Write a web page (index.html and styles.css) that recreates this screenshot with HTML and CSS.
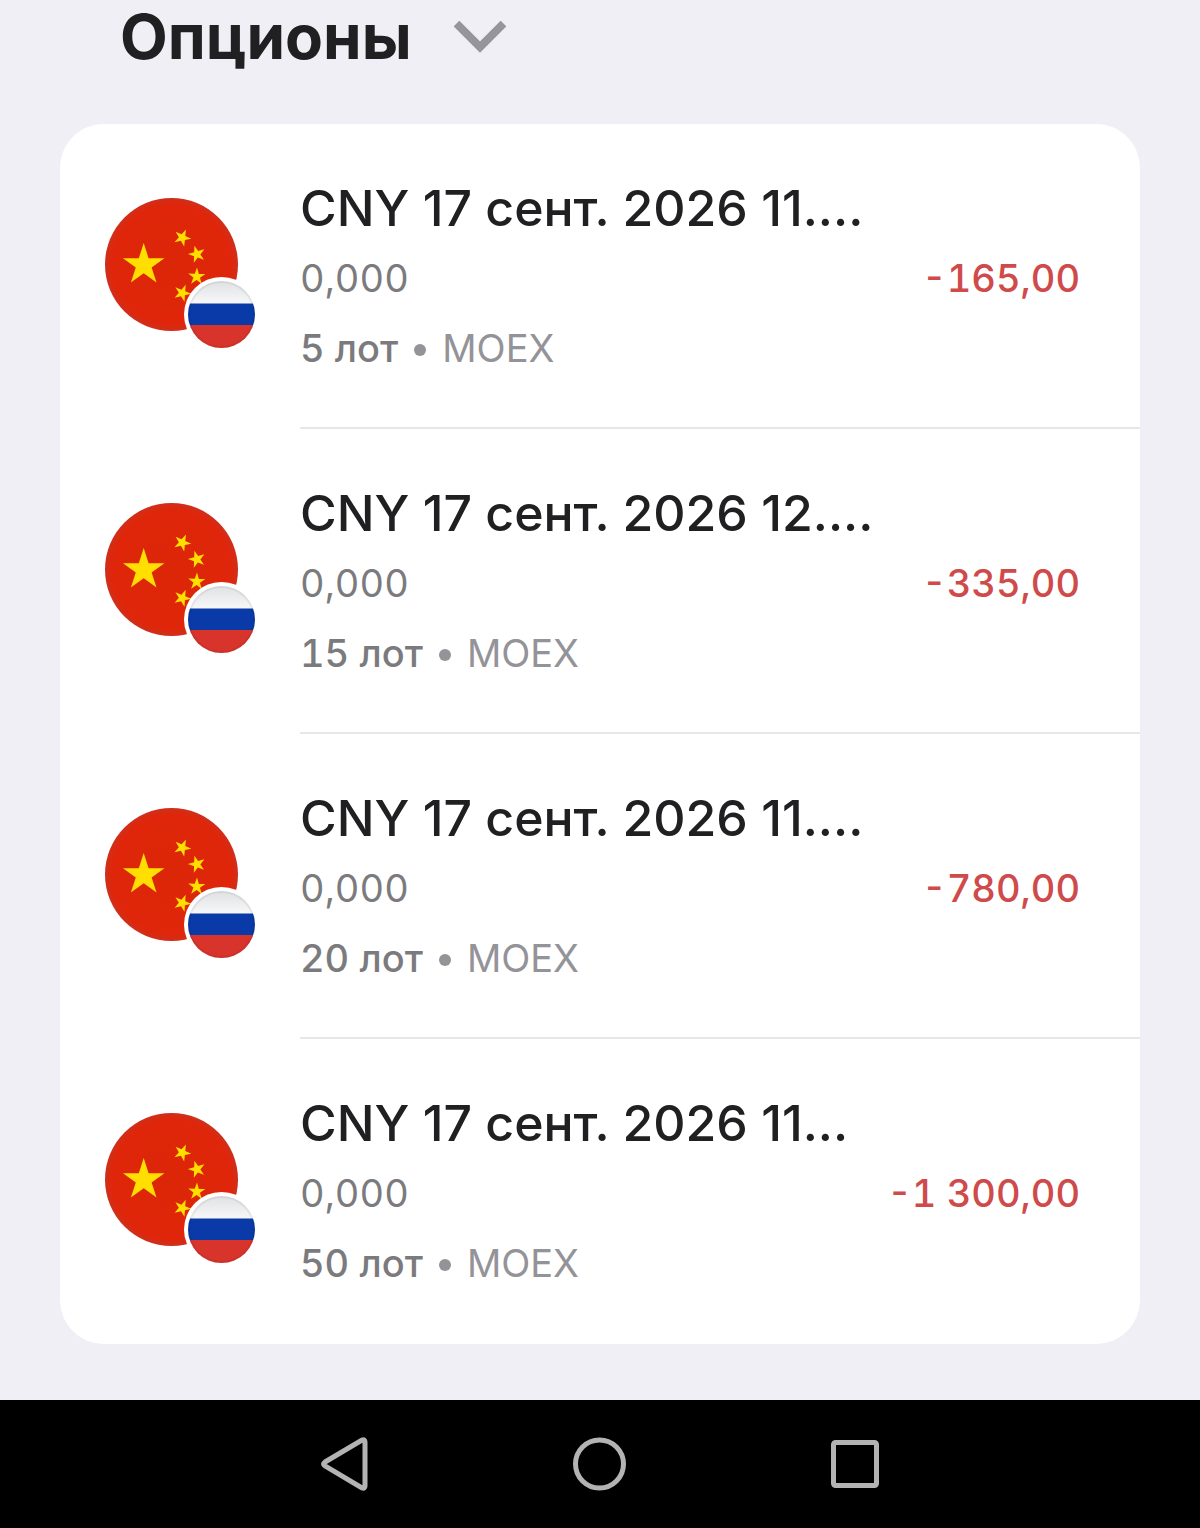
FILE: index.html
```html
<!DOCTYPE html>
<html lang="ru">
<head>
<meta charset="utf-8">
<meta name="viewport" content="width=device-width, initial-scale=1">
<title>Опционы</title>
<link rel="stylesheet" href="styles.css">
</head>
<body>
<svg class="sprite" aria-hidden="true">
  <defs>
    <radialGradient id="red" cx="50%" cy="50%" r="50%">
      <stop offset="0" stop-color="#dc2608"/>
      <stop offset="0.9" stop-color="#df260a"/>
      <stop offset="1" stop-color="#cf2f1c"/>
    </radialGradient>
    <linearGradient id="white" x1="0" y1="0" x2="0" y2="1">
      <stop offset="0" stop-color="#dfe1e3"/>
      <stop offset="1" stop-color="#f8f8f9"/>
    </linearGradient>
    <clipPath id="badge"><circle cx="116.5" cy="116.5" r="33.5"/></clipPath>
    <polygon id="star" points="0,-10 2.25,-3.09 9.51,-3.09 3.63,1.18 5.88,8.09 0,3.82 -5.88,8.09 -3.63,1.18 -9.51,-3.09 -2.25,-3.09"/>
    <symbol id="cny-moex" viewBox="0 0 150 150">
      <circle cx="66.5" cy="66.5" r="66.5" fill="url(#red)"/>
      <g fill="#ffde00">
        <use href="#star" transform="translate(38.7 66.9) scale(2.18)"/>
        <use href="#star" transform="translate(77.3 39.7) rotate(24) scale(.9)"/>
        <use href="#star" transform="translate(91.9 56.3) rotate(-16) scale(.9)"/>
        <use href="#star" transform="translate(91.7 78.6) rotate(2) scale(.9)"/>
        <use href="#star" transform="translate(77.3 95) rotate(22) scale(.9)"/>
      </g>
      <circle cx="116.5" cy="116.5" r="37.5" fill="#fff"/>
      <g clip-path="url(#badge)">
        <rect x="83" y="83" width="67" height="23" fill="url(#white)"/>
        <rect x="83" y="105.500" width="67" height="22" fill="#0a3aa8"/>
        <rect x="83" y="127" width="67" height="23" fill="#d8342c"/>
      </g>
      <circle cx="116.5" cy="116.5" r="32.5" fill="none" stroke="#000" stroke-opacity=".06" stroke-width="2"/>
    </symbol>
  </defs>
</svg>
<main class="screen">
  <h1 class="heading">
    <button class="heading-toggle" type="button" aria-expanded="true">
      <span>Опционы</span>
      <svg class="chevron" viewBox="0 0 52 32" aria-hidden="true"><path d="M2.5 2.5 26 26 49.500 2.500" fill="none" stroke="#96959b" stroke-width="8"/></svg>
    </button>
  </h1>
  <ul class="card">
    <li class="row">
      <svg class="flag" aria-hidden="true"><use href="#cny-moex"/></svg>
      <div class="body">
        <div class="info">
          <p class="name">CNY 17 сент. 2026 11....</p>
          <p class="price">0,000</p>
          <p class="meta"><b class="lots">5 лот</b><i class="dot"></i><span>MOEX</span></p>
        </div>
        <p class="value">-165,00</p>
      </div>
    </li>
    <li class="row">
      <svg class="flag" aria-hidden="true"><use href="#cny-moex"/></svg>
      <div class="body">
        <div class="info">
          <p class="name">CNY 17 сент. 2026 12....</p>
          <p class="price">0,000</p>
          <p class="meta"><b class="lots">15 лот</b><i class="dot"></i><span>MOEX</span></p>
        </div>
        <p class="value">-335,00</p>
      </div>
    </li>
    <li class="row">
      <svg class="flag" aria-hidden="true"><use href="#cny-moex"/></svg>
      <div class="body">
        <div class="info">
          <p class="name">CNY 17 сент. 2026 11....</p>
          <p class="price">0,000</p>
          <p class="meta"><b class="lots">20 лот</b><i class="dot"></i><span>MOEX</span></p>
        </div>
        <p class="value">-780,00</p>
      </div>
    </li>
    <li class="row">
      <svg class="flag" aria-hidden="true"><use href="#cny-moex"/></svg>
      <div class="body">
        <div class="info">
          <p class="name">CNY 17 сент. 2026 11...</p>
          <p class="price">0,000</p>
          <p class="meta"><b class="lots">50 лот</b><i class="dot"></i><span>MOEX</span></p>
        </div>
        <p class="value">-1 300,00</p>
      </div>
    </li>
  </ul>
</main>
<nav class="navbar" aria-label="Система">
  <button class="nav-button" type="button" aria-label="Назад">
    <svg viewBox="0 0 56 56" aria-hidden="true"><path d="M9 26 46 4Q49 3 49 6V50Q49 53 46 52L9 30Q6 28 9 26Z"/></svg>
  </button>
  <button class="nav-button" type="button" aria-label="Домой">
    <svg viewBox="0 0 56 56" aria-hidden="true"><circle cx="27.500" cy="28" r="24"/></svg>
  </button>
  <button class="nav-button" type="button" aria-label="Недавние">
    <svg viewBox="0 0 56 56" aria-hidden="true"><rect x="5.500" y="6.500" width="43" height="43" rx="2"/></svg>
  </button>
</nav>
</body>
</html>
```
FILE: styles.css
```css
* {
  box-sizing: border-box;
  margin: 0;
  padding: 0;
}

body {
  display: flex;
  flex-direction: column;
  min-height: 100vh;
  background: #f0eff5;
  color: #202022;
  font-family: Inter, Roboto, sans-serif;
}

.sprite {
  position: absolute;
  width: 0;
  height: 0;
}

.screen {
  flex: 1;
  padding: 0 60px 56px;
}

.heading {
  padding: 1px 60px 51px;
  font-size: 62px;
  line-height: 72px;
}

.heading-toggle {
  display: flex;
  align-items: center;
  gap: 42px;
  border: 0;
  background: none;
  color: inherit;
  font: inherit;
}

.chevron {
  width: 52px;
  height: 32px;
}

.card {
  border-radius: 44px;
  background: #fff;
  list-style: none;
}

.row {
  display: flex;
  gap: 45px;
  padding-left: 45px;
}

.flag {
  flex: none;
  width: 150px;
  height: 150px;
  margin-top: 74px;
}

.body {
  display: flex;
  flex: 1;
  align-items: center;
  justify-content: space-between;
  padding: 49px 60px 44px 0;
  border-bottom: 2px solid #e7e7e9;
}

.row:last-child .body {
  border-color: transparent;
}

.name,
.price,
.meta,
.value {
  line-height: 70px;
  white-space: nowrap;
}

.name {
  font-size: 50px;
  font-weight: 500;
}

.price,
.meta,
.value {
  font-size: 38px;
}

.price {
  color: #7b7b7e;
  font-variant-numeric: tabular-nums;
}

.meta {
  display: flex;
  align-items: center;
  gap: 16px;
  color: #939398;
}

.lots {
  color: #7b7b7e;
  font-weight: 500;
  font-variant-numeric: tabular-nums;
}

.dot {
  width: 12px;
  height: 12px;
  margin-top: 4px;
  border-radius: 50%;
  background: #939398;
}

.value {
  color: #cf4a4a;
  font-weight: 500;
  font-variant-numeric: tabular-nums;
}

.navbar {
  display: flex;
  align-items: center;
  justify-content: center;
  gap: 200px;
  height: 128px;
  background: #000;
}

.nav-button {
  width: 56px;
  height: 56px;
  border: 0;
  background: none;
}

.nav-button svg {
  display: block;
  width: 56px;
  height: 56px;
  fill: none;
  stroke: #b3b3b3;
  stroke-width: 5;
}
```
